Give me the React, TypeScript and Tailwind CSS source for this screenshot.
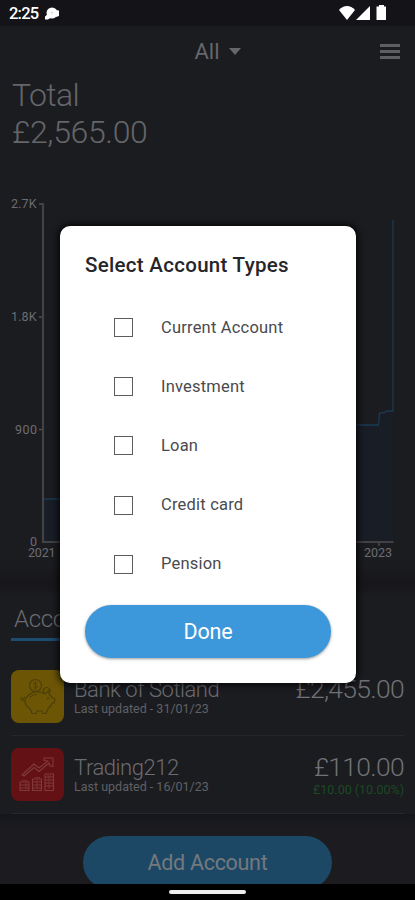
import React, { useState } from 'react';

const accountTypes = ['Current Account', 'Investment', 'Loan', 'Credit card', 'Pension'];

const StatusBar: React.FC = () => (
    <div className="h-[26px] shrink-0 bg-[#131318] flex items-center justify-between pl-[9px] pr-[28px] text-white">
        <div className="flex items-center gap-[7px]">
            <span className="text-[16.5px] leading-[26px] font-medium tracking-[-0.8px] pt-[2px]">2:25</span>
            <svg width="15" height="13" viewBox="0 0 15 13" fill="currentColor">
                <circle cx="7" cy="6" r="5.5" />
                <path d="M3 7 0 9.500v3h3l3-2zM10 3l4 .5v5.500l-3 1z" />
                <circle cx="7" cy="5.600" r="1.200" fill="#dddde0" />
            </svg>
        </div>
        <svg width="48" height="16" viewBox="0 0 48 16" fill="currentColor">
            <path d="M0 5C4.500-.3 11.500-.3 16 5L8 15z" />
            <path d="M31 1v14H17z" />
            <path d="M40 1.500V0h5v1.500h2V15H37.500V1.500z" />
        </svg>
    </div>
);

const BalanceChart: React.FC = () => (
    <svg className="block" width="415" height="374" viewBox="0 190 415 374">
        <path d="M43 499H300V425H379L380 412L391 411L393 410V219V542H43z" fill="#18202f" fillOpacity="0.45" />
        <path d="M43 499H300V425H378.500L379.500 413L385 412.500L386 411H393V220" fill="none" stroke="#1b3a52" strokeWidth="1.300" />
        <path d="M39 204H43M39 317H43M39 429.500H43M379 542V546" stroke="#505054" strokeWidth="1.300" />
        <path d="M43 203V542H393.500" fill="none" stroke="#424246" strokeWidth="2.200" />
        <g fill="#6c6c71" fontSize="12.500">
            <text x="11" y="208" textLength="25.500">2.7K</text>
            <text x="11" y="320.500" textLength="25.500">1.8K</text>
            <text x="15" y="433.500" textLength="22">900</text>
            <text x="30" y="546">0</text>
            <text x="28" y="557" textLength="27.500">2021</text>
            <text x="364" y="557" textLength="28">2023</text>
        </g>
    </svg>
);

const PiggyIcon: React.FC = () => (
    <svg width="53" height="53" viewBox="0 0 53 53" fill="none" stroke="#4e3f08" strokeWidth="1.200" strokeLinecap="round" strokeLinejoin="round">
        <circle cx="24.500" cy="15.500" r="6" />
        <path d="M26.300 13.400c-1-1.300-3.700-1-3.600.6.100 1.700 3.700 1 3.700 2.900 0 1.600-2.700 1.900-3.900.5M24.500 11.600v7.800" strokeWidth="0.900" />
        <path d="M34 24c-4-2.500-11-3-15 0-3 2-4.500 4-5 7 0 3.500 2 6 5 7.500l2 5h4l1-2.500h5l1 2.500h3l2-5c1.500-1 3-2.500 3.500-4.500l3-1.500v-4l-2.500-1c-1-2-2-2.500-3-3.500l.5-4z" />
        <path d="M14 31c-3 0-4.500-1.500-4-3.500m3.500-.5-2 3M33 23c-1.500-3 0-5.500 2.500-5.500s4 2 3.500 4.500M19 27c2-1.800 4-2.500 6.500-2.500" />
        <circle cx="37" cy="28.500" r=".5" />
    </svg>
);

const StocksIcon: React.FC = () => (
    <svg width="53" height="53" viewBox="0 0 53 53" fill="none" stroke="#7f3a39" strokeWidth="1.100" strokeLinejoin="round">
        <path d="M11 27 23 16l5 4 9-7-4-.5V10h9v8.500l-3-.5-1-3-10 8.500-5-4L13 28z" />
        <path d="M9 34h9v8.500H9zM21.500 31h9v11.500h-9zM34 26h8.500v16.500H34zM9 37h9m-9 3h9m3.500-6h9m-9 3h9m-9 3h9M34 29h8.500M34 32h8.500M34 35h8.500M34 38h8.500" />
        <path d="M11 32.500h5V34M23.500 29.500h5V31M36 28h4M15 35v6M26 32v9M38 28v13" strokeWidth="0.700" />
    </svg>
);

interface AccountRowProps {
    icon: React.ReactNode;
    iconClass: string;
    name: string;
    updated: string;
    balance: string;
    gain?: string;
}

const AccountRow: React.FC<AccountRowProps> = ({ icon, iconClass, name, updated, balance, gain }) => (
    <div className="mx-[11px] h-[78px] flex items-center border-b border-[#27272b]">
        <div className={`w-[53px] h-[53px] shrink-0 rounded-[8px] ${iconClass}`}>{icon}</div>
        <div className="ml-[10px] flex-1 h-[53px] pt-[8px]">
            <div className="text-[22px] leading-[24px] font-light text-[#6b6b70] tracking-[-0.45px] whitespace-nowrap">{name}</div>
            <div className="text-[12.5px] leading-[14px] text-[#606065] whitespace-nowrap">Last updated - {updated}</div>
        </div>
        <div className="h-[53px] pt-[5px] text-right">
            <div className="text-[26.5px] leading-[27px] font-light text-[#717176] tracking-[-0.7px]">{balance}</div>
            {gain && <div className="text-[12.5px] leading-[19px] text-[#1c4a24] whitespace-nowrap">{gain}</div>}
        </div>
    </div>
);

const AccountTypesDialog: React.FC = () => {
    const [selected, setSelected] = useState<string[]>([]);

    const toggle = (type: string) => {
        setSelected(selected.includes(type) ? selected.filter((t) => t !== type) : [...selected, type]);
    };

    return (
        <div className="absolute left-[60px] top-[226px] w-[296px] h-[457px] rounded-[10px] bg-white shadow-[0_0_7px_2px_rgba(0,0,0,0.8)] px-[25px] flex flex-col">
            <h2 className="mt-[25px] text-[20.5px] leading-[28px] font-medium text-[#25252a] tracking-[0.3px] whitespace-nowrap">Select Account Types</h2>
            <div className="mt-[19px] flex flex-col">
                {accountTypes.map((type) => (
                    <label key={type} className="h-[59.2px] flex items-center pl-[29px] cursor-pointer">
                        <input type="checkbox" className="peer sr-only" checked={selected.includes(type)} onChange={() => toggle(type)} />
                        <span className="w-[19px] h-[19px] border-[1.5px] border-[#5c5c5e] peer-checked:bg-[#3c98da]" />
                        <span className="ml-[28px] text-[16.5px] leading-[20px] text-[#4a4a4e] tracking-[0.2px]">{type}</span>
                    </label>
                ))}
            </div>
            <button className="mt-[11px] h-[53px] shrink-0 rounded-full bg-[#3c98da] text-white text-[21.5px] tracking-[-0.2px] pt-px shadow-[0_1px_3px_rgba(0,0,0,0.4)]">Done</button>
        </div>
    );
};

const App: React.FC = () => {
    return (
        <div className="relative w-[415px] h-[900px] overflow-hidden flex flex-col bg-[#1b1c20] font-['Roboto',sans-serif]">
            <StatusBar />
            <header className="h-[50px] shrink-0 grid grid-cols-[1fr_auto_1fr] items-center pr-[15px]">
                <div className="col-start-2 flex items-center gap-[9px] pl-[35px] text-[#66666b]">
                    <span className="text-[22px] leading-[30px] pt-[2px]">All</span>
                    <svg width="12" height="7" viewBox="0 0 12 7" fill="currentColor"><path d="M0 0h12L6 7z" /></svg>
                </div>
                <svg className="justify-self-end" width="20" height="15" viewBox="0 0 20 15" fill="#5f5f63">
                    <path d="M0 0h20v3H0zM0 6h20v3H0zM0 12h20v3H0z" />
                </svg>
            </header>
            <div className="pl-[12px] pt-px h-[114px] shrink-0 text-[32px] leading-[37px] font-light text-[#65656a]">
                <div className="tracking-[-0.6px]">Total</div>
                <div className="tracking-[-0.35px]">£2,565.00</div>
            </div>
            <BalanceChart />
            <div className="h-[20px] shrink-0 bg-gradient-to-b from-[#1b1c20] to-[#17171b]" />
            <section className="h-[230px] shrink-0 bg-gradient-to-b from-[#17171b] to-[#1b1c20] to-[12px]">
                <div className="h-[74px] px-[11px] pt-[21px]">
                    <div className="h-[36px] w-[150px] border-b-3 border-[#1c4c70] pl-[3px] text-[24px] leading-[28px] font-light text-[#6b6b70] tracking-[-0.3px]">Accounts</div>
                </div>
                <AccountRow icon={<PiggyIcon />} iconClass="bg-[#6c5606]" name="Bank of Sotland" updated="31/01/23" balance="£2,455.00" />
                <AccountRow icon={<StocksIcon />} iconClass="bg-[#641115]" name="Trading212" updated="16/01/23" balance="£110.00" gain="£10.00 (10.00%)" />
            </section>
            <footer className="flex-1 pt-[22px] bg-gradient-to-b from-[#15161b] to-[#1c1c20] to-20%">
                <button className="block mx-auto w-[249px] h-[53px] rounded-full bg-[#1c4866] text-[#75797d] text-[21.5px] tracking-[-0.3px] pt-px">Add Account</button>
            </footer>
            <div className="absolute left-0 bottom-0 w-full h-[16px] bg-black flex justify-center items-center">
                <div className="w-[77px] h-[4px] rounded-full bg-[#eeeeee]" />
            </div>
            <AccountTypesDialog />
        </div>
    );
};

export default App;
